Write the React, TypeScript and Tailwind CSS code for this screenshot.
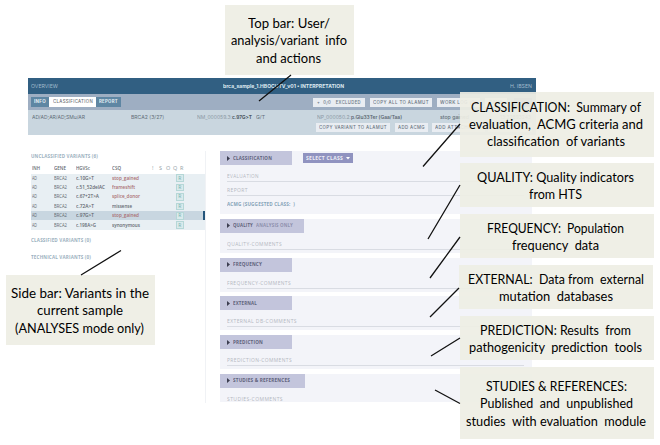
import { useLayoutEffect, useRef, useState } from "react";

/** A single line of text stretched horizontally to the width of its box. */
function Fit({ text, className = "" }: { text: string; className?: string }) {
  const box = useRef<HTMLSpanElement>(null);
  const inner = useRef<HTMLSpanElement>(null);
  const [scale, setScale] = useState(1);
  useLayoutEffect(() => {
    if (box.current && inner.current && inner.current.offsetWidth) {
      setScale(box.current.clientWidth / inner.current.getBoundingClientRect().width);
    }
  }, [text]);
  return (
    <span ref={box} className={`block shrink-0 whitespace-pre ${className}`}>
      <span ref={inner} className="inline-block origin-left" style={{ transform: `scaleX(${scale})` }}>
        {text}
      </span>
    </span>
  );
}

function Action({ text, box, label }: { text: string; box: string; label: string }) {
  return (
    <div className={`flex h-[9px] shrink-0 items-center justify-center bg-[#e9edf2] text-[4.5px] leading-[9px] font-medium tracking-[0.4px] text-[#68737f] ${box}`}>
      <Fit text={text} className={label} />
    </div>
  );
}

function TopBar() {
  return (
    <header className="font-['Inter',sans-serif]">
      <div className="flex h-4 items-center bg-[#315f82] pl-[3px] text-[5px] leading-4 text-[#a0bbcd]">
        <Fit text="OVERVIEW" className="w-[27px]" />
        <Fit text="brca_sample_1.HBOCUTV_v01 • INTERPRETATION" className="ml-[165px] w-[121px] font-bold text-[#dfeaf1]" />
        <Fit text="H. IBSEN" className="ml-[166px] w-[22px]" />
      </div>
      <div className="flex h-4 items-center bg-[#9eaec2] pl-[3px] text-[4.5px] leading-[10px] font-bold tracking-[0.3px]">
        <div className="flex h-[10px] w-[18px] items-center justify-center bg-[#5e86a3] text-[#e2edf3]">
          <Fit text="INFO" className="w-3" />
        </div>
        <div className="flex h-[10px] w-[47px] items-center justify-center bg-white font-medium text-[#6d6f75]">
          <Fit text="CLASSIFICATION" className="w-10" />
        </div>
        <div className="flex h-[10px] w-[25px] items-center justify-center bg-[#5e86a3] text-[#e2edf3]">
          <Fit text="REPORT" className="w-[19px]" />
        </div>
        <div className="ml-[192px] flex">
          <Action text="+  0/0   EXCLUDED" box="w-[52px]" label="w-[44px]" />
          <Action text="COPY ALL TO ALAMUT" box="ml-[5px] w-[62px]" label="w-[56px]" />
          <Action text="WORK LOG (0)" box="ml-[5px] w-[43px]" label="w-[37px]" />
          <Action text="SAVE" box="ml-[5px] w-[22px]" label="w-[14px]" />
          <div className="ml-[7px] h-[9px] w-[18px] bg-[#777aaa]" />
        </div>
      </div>
      <div className="h-[25px] bg-[#c9d6df] text-[5px] leading-3 text-[#626e78]">
        <div className="flex h-[13px] items-center pl-1">
          <Fit text="AD/AD;AR/AD;SMu/AR" className="w-[53px]" />
          <Fit text="BRCA2 (3/27)" className="ml-[46px] w-[33px]" />
          <Fit text="NM_000059.3:" className="ml-[33px] w-[35px] text-[#8c9aa5]" />
          <Fit text="c.97G>T" className="w-5 font-bold text-[#4e5a64]" />
          <Fit text="G/T" className="ml-1 w-[9px]" />
          <Fit text="NP_000050.2:" className="ml-[52px] w-[34px] text-[#8c9aa5]" />
          <Fit text="p.Glu33Ter (Gaa/Taa)" className="w-[51px] font-semibold text-[#5a6670]" />
          <Fit text="stop gained" className="ml-[38px] w-[29px] font-medium" />
          <Fit text="13:32893243" className="ml-[31px] w-[31px]" />
        </div>
        <div className="flex pl-72">
          <Action text="COPY VARIANT TO ALAMUT" box="w-[74px]" label="w-[68px]" />
          <Action text="ADD ACMG" box="ml-[5px] w-[33px]" label="w-[27px]" />
          <Action text="ADD ATTACHMENT" box="ml-1 w-[53px]" label="w-[48px]" />
          <Action text="COLLAPSE ALL" box="ml-[3px] w-[44px]" label="w-[36px]" />
        </div>
      </div>
    </header>
  );
}

const variants = [
  { name: "c.10G>T", nw: "w-[18px]", csq: "stop_gained", cw: "w-[27px]", severe: true },
  { name: "c.51_52delAC", nw: "w-[29px]", csq: "frameshift", cw: "w-[23px]", severe: true },
  { name: "c.67+2T>A", nw: "w-[23px]", csq: "splice_donor", cw: "w-[28px]", severe: true },
  { name: "c.72A>T", nw: "w-[18px]", csq: "missense", cw: "w-[20px]", severe: false },
  { name: "c.97G>T", nw: "w-[18px]", csq: "stop_gained", cw: "w-[27px]", severe: true },
  { name: "c.198A>G", nw: "w-[20px]", csq: "synonymous", cw: "w-[28px]", severe: false },
];

function SideBar() {
  const cols = "grid grid-cols-[22px_22px_36px_40px_7px_7px_7px_7px_1fr] items-center pl-px";
  return (
    <aside className="h-[252px] w-[178px] shrink-0 border-r border-[#f0f2f5] pl-[3px] font-['Open_Sans',sans-serif] text-[5.5px] font-semibold text-[#5f676e]">
      <Fit text="UNCLASSIFIED VARIANTS (6)" className="h-3 w-[67px] text-[5px] leading-[10px] font-bold tracking-[0.2px] text-[#9cb1c0]" />
      <div className={`${cols} h-[10.5px] leading-[10px]`}>
        <Fit text="INH" className="w-2" />
        <Fit text="GENE" className="w-3" />
        <Fit text="HGVSc" className="w-[14px]" />
        <Fit text="CSQ" className="w-[9px]" />
        <span className="font-normal text-[#929da5]">!</span>
        <span className="font-normal text-[#929da5]">S</span>
        <span className="font-normal text-[#929da5]">O</span>
        <span className="font-normal text-[#929da5]">Q</span>
        <span className="font-normal text-[#929da5]">R</span>
      </div>
      <div className="bg-[#e8eff3]">
        {variants.map((v, i) => (
          <div key={v.name} className={`flex h-[9.4px] leading-[9px] ${i === 4 ? "bg-[#c8d6e0]" : ""}`}>
            <div className={`${cols} w-[172px]`}>
              <Fit text="AD" className="w-[5px] font-normal" />
              <Fit text="BRCA2" className="w-[13px] font-normal" />
              <Fit text={v.name} className={v.nw} />
              <Fit text={v.csq} className={`${v.cw} ${v.severe ? "text-[#a86d70]" : ""}`} />
              <span className="col-start-9 -ml-1 flex h-[7.5px] w-[7.5px] items-center justify-center border border-[#b5d7d7] bg-[#d9eaec] text-[5px] leading-none font-normal text-[#76b2b0]">
                R
              </span>
            </div>
            {i === 4 && <div className="h-full w-[2px] bg-[#24557b]" />}
          </div>
        ))}
      </div>
      <Fit text="CLASSIFIED VARIANTS (0)" className="mt-[5px] h-3 w-[60px] text-[5px] leading-[11px] font-bold tracking-[0.2px] text-[#9cb1c0]" />
      <Fit text="TECHNICAL VARIANTS (0)" className="mt-[5px] h-3 w-[60px] text-[5px] leading-[11px] font-bold tracking-[0.2px] text-[#9cb1c0]" />
    </aside>
  );
}

function Tag({ title, label, box = "w-[72px]", note }: { title: string; label: string; box?: string; note?: string }) {
  return (
    <div className={`flex h-[14px] items-center bg-[#c3c5dc] pl-[7px] text-[5px] leading-[13px] font-bold tracking-[0.2px] text-[#60627b] ${box}`}>
      <svg width="3" height="5" viewBox="0 0 3 5">
        <path d="M0 0 L3 2.5 L0 5Z" fill="#3c3e50" />
      </svg>
      <Fit text={title} className={`ml-[3px] ${label}`} />
      {note && <Fit text={note} className="ml-[3px] w-[37px] text-[#8e90ad]" />}
    </div>
  );
}

function Comment({ text, label }: { text: string; label: string }) {
  return (
    <div className="mr-2 ml-[7px] h-[14px] border-b border-[#d9dce3] text-[5px] leading-4 tracking-[0.4px] text-[#b4b8c1]">
      <Fit text={text} className={label} />
    </div>
  );
}

const sections = [
  { title: "QUALITY", label: "w-[20px]", box: "w-[84px]", note: "ANALYSIS ONLY", comment: "QUALITY-COMMENTS", cw: "w-[55px]" },
  { title: "FREQUENCY", label: "w-[29px]", comment: "FREQUENCY-COMMENTS", cw: "w-[64px]" },
  { title: "EXTERNAL", label: "w-[24px]", comment: "EXTERNAL DB-COMMENTS", cw: "w-[70px]" },
  { title: "PREDICTION", label: "w-[30px]", comment: "PREDICTION-COMMENTS", cw: "w-[65px]" },
  { title: "STUDIES & REFERENCES", label: "w-[57px]", box: "w-[85px]", comment: "STUDIES-COMMENTS", cw: "w-[56px]" },
];

function Sections() {
  return (
    <main className="ml-[14px] flex h-[251px] w-[312px] flex-col gap-[4.8px] overflow-hidden font-['Open_Sans',sans-serif]">
      <section className="h-[63px] shrink-0 bg-[#f3f4f9]">
        <div className="flex">
          <Tag title="CLASSIFICATION" label="w-[39px]" />
          <div className="mt-[2px] ml-[11px] flex h-[10px] w-[50px] items-center bg-[#9093c0] pl-[3px] text-[5px] leading-[10px] font-bold tracking-[0.3px] text-[#eeeef7]">
            <Fit text="SELECT CLASS" className="w-[37px]" />
            <svg className="ml-[3px]" width="4" height="3" viewBox="0 0 4 3">
              <path d="M0 0H4L2 2.5Z" fill="white" />
            </svg>
          </div>
        </div>
        <div className="pt-[3px]">
          <Comment text="EVALUATION" label="w-[32px]" />
          <Comment text="REPORT" label="w-[21px]" />
        </div>
        <Fit text="ACMG (SUGGESTED CLASS:  )" className="ml-[7px] w-[68px] text-[5px] leading-4 font-bold tracking-[0.2px] text-[#86a3b8]" />
      </section>
      {sections.map((s) => (
        <section key={s.title} className="h-[34px] shrink-0 bg-[#f3f4f9]">
          <Tag title={s.title} label={s.label} box={s.box} note={s.note} />
          <div className="pt-[3px]">
            <Comment text={s.comment} label={s.cw} />
          </div>
        </section>
      ))}
    </main>
  );
}

type Line = [string, string];
const callouts: { box: string; lines: Line[] }[] = [
  { box: "left-[225px] top-[5px] h-[70px] w-[129px] pr-[2px]", lines: [["Top bar: User/", "w-[82px]"], ["analysis/variant  info", "w-[116px]"], ["and actions", "w-[65px]"]] },
  { box: "left-[6px] top-[275px] h-[70px] w-[149px] pr-[2px]", lines: [["Side bar: Variants in the", "w-[138px]"], ["current sample", "w-[86px]"], ["(ANALYSES mode only)", "w-[129px]"]] },
  { box: "left-[460px] top-[92px] h-[65px] w-[194px] pr-[2px] pb-[2px]", lines: [["CLASSIFICATION:  Summary of", "w-[170px]"], ["evaluation,  ACMG criteria and", "w-[174px]"], ["classification  of variants", "w-[138px]"]] },
  { box: "left-[460px] top-[163px] h-[44px] w-[194px] pr-[3px]", lines: [["QUALITY: Quality indicators", "w-[157px]"], ["from HTS", "w-[53px]"]] },
  { box: "left-[460px] top-[214px] h-[44px] w-[194px] pr-[3px]", lines: [["FREQUENCY:  Population", "w-[137px]"], ["frequency  data", "w-[87px]"]] },
  { box: "left-[459px] top-[265px] h-[44px] w-[194px]", lines: [["EXTERNAL:  Data from  external", "w-[176px]"], ["mutation  databases", "w-[114px]"]] },
  { box: "left-[460px] top-[316px] h-[44px] w-[194px] pr-[3px]", lines: [["PREDICTION: Results  from", "w-[151px]"], ["pathogenicity  prediction  tools", "w-[173px]"]] },
  { box: "left-[460px] top-[367px] h-[72px] w-[194px] pr-[2px]", lines: [["STUDIES & REFERENCES:", "w-[141px]"], ["Published  and  unpublished", "w-[153px]"], ["studies  with evaluation  module", "w-[180px]"]] },
];

export default function App() {
  return (
    <div className="relative h-[445px] w-[660px] overflow-hidden bg-white pt-[78px] pl-7">
      <div className="w-[508px]">
        <TopBar />
        <div className="flex pt-4">
          <SideBar />
          <Sections />
        </div>
      </div>
      {callouts.map((c) => (
        <div key={c.box} className={`absolute flex flex-col items-center justify-center bg-[#eeeee4]/92 font-['Lato',sans-serif] text-[14px] leading-[17.3px] text-black ${c.box}`}>
          {c.lines.map(([text, width]) => (
            <Fit key={text} text={text} className={width} />
          ))}
        </div>
      ))}
      <svg className="absolute top-0 left-0" width="660" height="445" fill="none" stroke="#111" strokeWidth="1.3">
        <path d="M291 75L259 101M121 250.500L81 275M460 124L423 166.500M460 185L428 239M460 237L430 278M459 288L430 317M460 338L431 356M435 390L460 403.500" />
      </svg>
    </div>
  );
}
